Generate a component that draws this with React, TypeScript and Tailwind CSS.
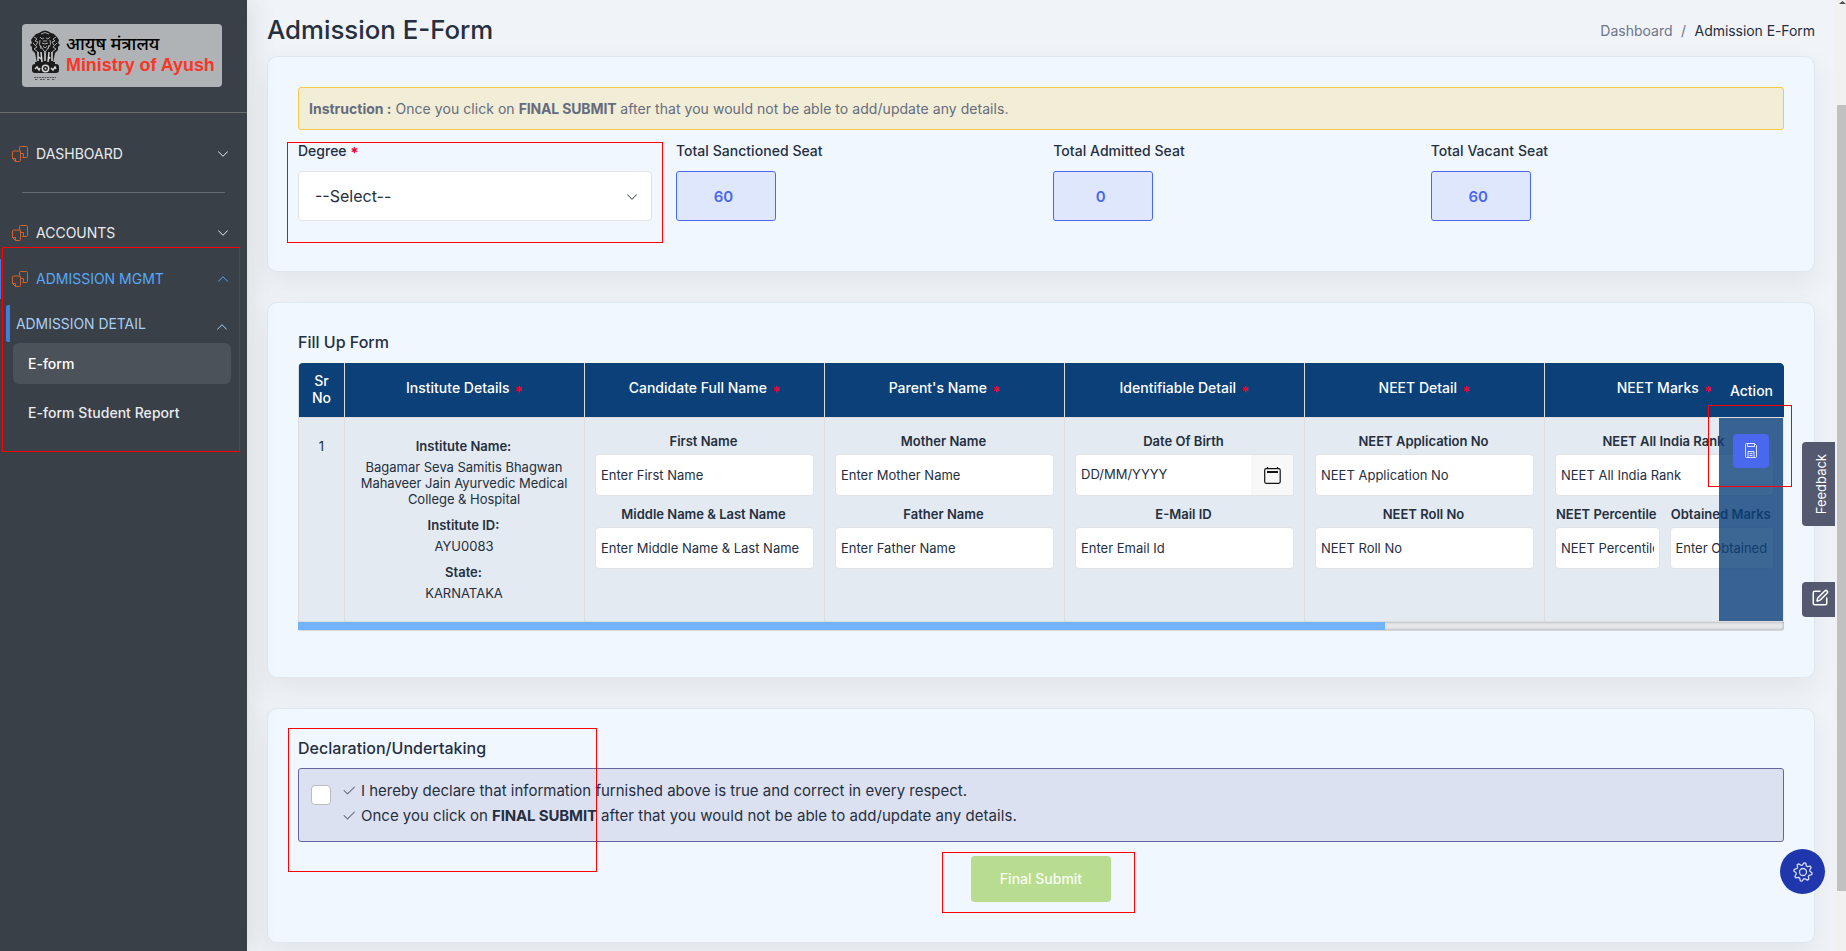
import React from "react";
import { BsChevronDown, BsChevronUp, BsCheck2 } from "react-icons/bs";
import { SquarePen } from "lucide-react";

function NavIcon() {
  return (
    <svg className="size-4 shrink-0" viewBox="0 0 16 16" fill="none" stroke="#d0622f" strokeWidth="1">
      <path d="M7.500 4.500v-3a1 1 0 0 1 1-1h6a1 1 0 0 1 1 1v9a1 1 0 0 1-1 1h-4" />
      <path d="M8.500 5H1.500a1 1 0 0 0-1 1v6.500l3 3h4a1 1 0 0 0 1-1z" />
      <path d="M.5 12.500h3v3" />
      <path d="M8.500 7.500h3v3l-1 1" />
    </svg>
  );
}

function Emblem() {
  return (
    <svg className="h-[51px] w-8 shrink-0" viewBox="0 0 32 51">
      <g fill="#1c1c1c">
        <path d="M10 3q6-5 12 0l3 1 3 3 2 3-1 3 2 2-2 2v3l-3 3-2 10 1 3H7l1-3-2-10-3-3v-3l-2-2 2-2-1-3 2-3 3-3z" />
        <rect x="3" y="34" width="27" height="9" rx="3" />
        <path d="M6 32h20v3H6z" />
      </g>
      <g fill="none" stroke="#b4b6b8" strokeWidth=".9">
        <path d="M12 4q4-3 8 0M11 7l2 2 2-1M21 7l-2 2-2-1M14 11h4M13 13q3 2 6 0M11 10q-2 5 2 8l2 3M21 10q2 5-2 8l-2 3M5 7l3 2-2 2 3 1-2 3M27 7l-3 2 2 2-3 1 2 3M4 13l4 4-3 2 4 3M28 13l-4 4 3 2-4 3M11 15l1 4M20 15l-1 4M14 16l2 2 2-2" />
      </g>
      <g fill="none" stroke="#d5d6d7" strokeWidth="1.5">
        <path d="M9 22v9M12 22l1 10M16 21v10M20 22l-1 10M23 22v9M10 27l2 2M21 27l-1 2" />
        <circle cx="16.500" cy="38.500" r="3.200" />
        <path d="M6 39l2-2 2 3 1-2M22 38l2 2 2-3 1 2" />
      </g>
      <circle cx="16.500" cy="38.500" r="1" fill="#ddd" />
      <path d="M5 47.500h22M6 49.500h3M11 49.500h5M18 49.500h3M23 49.500h3" stroke="#555" strokeWidth="1" strokeDasharray="2 .6" />
    </svg>
  );
}

function SaveIcon() {
  return (
    <svg className="h-[15px] w-3" viewBox="0 0 12 15" fill="none" stroke="#dfe6ff" strokeWidth="1">
      <path d="M1.500.5h8l2 2v11a1 1 0 0 1-1 1h-9a1 1 0 0 1-1-1v-12a1 1 0 0 1 1-1z" />
      <path d="M2.500.5v3h7v-3M3 14.500v-6h6v6M4.500 10.500h3M4.500 12.500h3" />
    </svg>
  );
}

function CalendarIcon() {
  return (
    <svg className="h-[17px] w-[17px]" viewBox="0 0 17 17" fill="none" stroke="#111" strokeWidth="1.200">
      <rect x=".7" y="1.700" width="15.500" height="14.600" rx="1.500" />
      <path d="M3.500 0v2M13.500 0v2" />
      <path d="M3 5h11" strokeWidth="2" />
    </svg>
  );
}

function GearIcon() {
  const n = 8;
  const pts: string[] = [];
  for (let i = 0; i < n * 4; i++) {
    const a = ((i - 0.5) / (n * 4)) * Math.PI * 2 + 0.2;
    const r = i % 4 < 2 ? 9.2 : 7;
    pts.push(`${(10 + r * Math.cos(a)).toFixed(2)},${(10 + r * Math.sin(a)).toFixed(2)}`);
  }
  return (
    <svg className="size-5" viewBox="0 0 20 20" fill="none" stroke="#d5dcf8" strokeWidth="1.300" strokeLinejoin="round">
      <polygon points={pts.join(" ")} />
      <circle cx="10" cy="10" r="3.500" />
    </svg>
  );
}

function NavItem({ label, open }: { label: string; open?: boolean }) {
  return (
    <div className={`flex h-10 items-center pr-[18px] pl-3 text-[14px] ${open ? "text-[#55a9f8]" : "text-[#e9ecef]"}`}>
      <NavIcon />
      <span className="ml-2 flex-1 pb-0.5">{label}</span>
      {open ? <BsChevronUp size={12} /> : <BsChevronDown size={12} />}
    </div>
  );
}

function Field({ label, placeholder, className = "" }: { label: string; placeholder: string; className?: string }) {
  return (
    <div className={`flex min-w-0 flex-col text-[13px] ${className}`}>
      <div className="flex h-[26px] items-center justify-center pt-0.5 pr-0.5 font-semibold whitespace-nowrap">{label}</div>
      <div className="flex h-[42px] items-center rounded-[4px] border border-[#e2e3e6] bg-white px-[5px] pt-0.5">
        <span className="overflow-hidden whitespace-nowrap">{placeholder}</span>
      </div>
    </div>
  );
}

function DateField() {
  return (
    <div className="flex flex-col text-[13px]">
      <div className="flex h-[26px] items-center justify-center pt-0.5 pr-0.5 font-semibold">Date Of Birth</div>
      <div className="flex h-[42px] items-stretch overflow-hidden rounded-l-[4px] border border-[#e2e3e6] bg-white">
        <span className="flex flex-1 items-center pl-[5px]">DD/MM/YYYY</span>
        <span className="flex w-[42px] items-center justify-center bg-[#f8f8f8]">
          <CalendarIcon />
        </span>
      </div>
    </div>
  );
}

function Column({ title, children }: { title: string; children: React.ReactNode }) {
  return (
    <div className="flex w-60 shrink-0 flex-col border-l border-[#dddddf]">
      <div className="flex h-[54px] items-center justify-center gap-[5px] bg-[#0b4079] pb-1 text-sm font-medium text-white">
        <span>{title}</span>
        <span className="relative top-[3px] text-[15px] leading-none font-bold text-[#f0022c]">*</span>
      </div>
      <div className="flex flex-1 flex-col gap-[5px] border-t border-b border-[#dddddf] pt-[10px] pr-[10px] pl-[10px]">{children}</div>
    </div>
  );
}

function Seat({ label, value }: { label: string; value: string }) {
  return (
    <div className="flex w-[353.5px] flex-col">
      <span className="h-5 text-sm leading-5 font-medium tracking-[0.04px]">{label}</span>
      <div className="mt-[10px] flex h-[50px] w-[100px] items-center justify-center rounded-[3px] border border-[#4a68ee] bg-[#dfe7fd] pt-0.5 pr-[5px] text-[15px] font-semibold text-[#4a68ee]">
        {value}
      </div>
    </div>
  );
}

const card = "rounded-[10px] border border-[#dfe8f1] bg-[#f0f7ff] shadow-[0_12px_28px_rgba(60,80,80,0.08)]";

export default function App() {
  return (
    <div className="relative flex h-[951px] w-[1846px] overflow-hidden bg-[#f0f3f8] font-['Inter',sans-serif] text-[#252f40]">
      <aside className="z-10 w-[247px] shrink-0 bg-[#3a4047] shadow-[0_0_28px_rgba(60,80,80,0.16)]">
        <div className="flex h-[113px] items-start border-b border-[#6a6c6c] px-[22px] pt-6">
          <div className="flex h-[63px] w-[200px] items-center rounded-[4px] bg-[#b0b3b6] pl-[7px]">
            <Emblem />
            <div className="ml-[5px] flex flex-col pb-0.5 whitespace-nowrap">
              <span className="h-5 pt-px font-['Noto_Sans_Devanagari','Noto_Sans',sans-serif] text-[17.800px] leading-5 font-medium text-black">आयुष मंत्रालय</span>
              <span className="h-5 font-['Liberation_Sans',sans-serif] text-[17.900px] leading-5 font-bold text-[#f93528]">Ministry of Ayush</span>
            </div>
          </div>
        </div>
        <div className="pt-[21px]">
          <NavItem label="DASHBOARD" />
        </div>
        <div className="mx-[22px] mt-[18px] h-px bg-[#65696f]" />
        <div className="pt-5">
          <NavItem label="ACCOUNTS" />
        </div>
        <div className="mt-[6px] flex h-10 items-stretch">
          <div className="w-px bg-[#4080dd]" />
          <div className="-ml-px flex-1">
            <NavItem label="ADMISSION MGMT" open />
          </div>
        </div>
        <div className="mt-[6px] ml-[6px] flex h-[37px] items-center text-[#a8cff5]">
          <div className="h-full w-1 rounded-l-[2px] bg-[#3f7fdc]" />
          <span className="ml-[6px] flex-1 pt-px text-[13.900px]">ADMISSION DETAIL</span>
          <BsChevronUp size={12} className="mt-[6px] mr-[19px]" />
        </div>
        <div className="mt-px mr-4 ml-[13px] flex h-[41px] items-center rounded-md bg-[#4c5259] pl-[15px] text-[14px] font-medium text-white">E-form</div>
        <div className="mt-2 mr-4 ml-[13px] flex h-[41px] items-center pl-[15px] text-[14px] font-medium tracking-[0.04px] text-[#e9ecef]">E-form Student Report</div>
      </aside>

      <main className="flex w-[1588px] shrink-0 flex-col pr-5 pl-5">
        <div className="flex h-14 shrink-0 items-center justify-between pt-[4px]">
          <h1 className="text-[25.800px] font-medium">Admission E-Form</h1>
          <div className="flex gap-[8.5px] text-[14px]">
            <span className="text-[#6e7589]">Dashboard</span>
            <span className="text-[#6e7589]">/</span>
            <span className="tracking-[-0.06px]">Admission E-Form</span>
          </div>
        </div>

        <section className={`${card} h-[216px] shrink-0 px-[30px] pt-[30px]`}>
          <div className="flex h-[43px] items-center rounded-[3px] border border-[#f5cb45] bg-[#f2edd6] px-[10px] text-[14px] tracking-[0.05px] text-[#656c7e]">
            <span>
              <b className="tracking-normal">Instruction :</b> Once you click on <b className="tracking-[-0.15px]">FINAL SUBMIT</b> after that you would not be able to add/update any
              details.
            </span>
          </div>
          <div className="mt-[11px] flex gap-6">
            <div className="flex w-[354px] flex-col">
              <span className="h-5 text-sm leading-5 font-medium">
                Degree <span className="relative top-0.5 text-[15px] leading-none font-bold text-[#f0022c]">*</span>
              </span>
              <div className="mt-[10px] flex h-[50px] items-center justify-between rounded-[4px] border border-[#dfe3e8] bg-white pr-[13px] pl-4 text-base">
                <span>--Select--</span>
                <BsChevronDown size={12} className="mt-[2px]" />
              </div>
            </div>
            <Seat label="Total Sanctioned Seat" value="60" />
            <Seat label="Total Admitted Seat" value="0" />
            <Seat label="Total Vacant Seat" value="60" />
          </div>
        </section>

        <section className={`${card} mt-[30px] h-[376px] shrink-0 px-[30px] pt-[29px]`}>
          <h2 className="h-[31px] text-[16px] leading-5 font-medium">Fill Up Form</h2>
          <div className="relative flex h-[259px] overflow-hidden rounded-t-[5px] bg-[#e3eaf1]">
            <div className="flex w-[46px] shrink-0 flex-col border-l border-[#dddddf] text-center">
              <div className="h-[54px] bg-[#0b4079] pt-[9px] text-sm leading-[17px] font-medium text-white">
                Sr
                <br />
                No
              </div>
              <div className="flex-1 border-t border-b border-[#dddddf] pt-[19px] text-[13px]">1</div>
            </div>
            <Column title="Institute Details">
              <div className="pt-[10px] pr-[5px] pl-[4px] text-center text-[13px] leading-4">
                <div className="pr-px font-semibold">Institute Name:</div>
                <div className="mt-[5px] tracking-[-0.02px]">Bagamar Seva Samitis Bhagwan Mahaveer Jain Ayurvedic Medical College &amp; Hospital</div>
                <div className="mt-[10px] pr-px font-semibold">Institute ID:</div>
                <div className="mt-[5px]">AYU0083</div>
                <div className="mt-[10px] pr-px font-semibold">State:</div>
                <div className="mt-[5px]">KARNATAKA</div>
              </div>
            </Column>
            <Column title="Candidate Full Name">
              <Field label="First Name" placeholder="Enter First Name" />
              <Field label="Middle Name & Last Name" placeholder="Enter Middle Name & Last Name" />
            </Column>
            <Column title="Parent's Name">
              <Field label="Mother Name" placeholder="Enter Mother Name" />
              <Field label="Father Name" placeholder="Enter Father Name" />
            </Column>
            <Column title="Identifiable Detail">
              <DateField />
              <Field label="E-Mail ID" placeholder="Enter Email Id" />
            </Column>
            <Column title="NEET Detail">
              <Field label="NEET Application No" placeholder="NEET Application No" />
              <Field label="NEET Roll No" placeholder="NEET Roll No" />
            </Column>
            <Column title="NEET Marks">
              <Field label="NEET All India Rank" placeholder="NEET All India Rank" />
              <div className="flex gap-[10px]">
                <Field className="flex-1" label="NEET Percentile" placeholder="NEET Percentile" />
                <Field className="flex-1" label="Obtained Marks" placeholder="Enter Obtained" />
              </div>
            </Column>
            <div className="absolute top-0 right-0 flex h-full w-[65px] flex-col">
              <div className="flex h-[54px] items-center justify-center bg-[#0b4079] text-[14px] font-medium text-white">Action</div>
              <div className="mt-px mr-px mb-px flex flex-1 items-start justify-center bg-[#0b4079]/80 pt-4">
                <div className="flex h-[34px] w-9 items-center justify-center rounded-[4px] bg-[#4a68ee] pb-0.5">
                  <SaveIcon />
                </div>
              </div>
            </div>
          </div>
          <div className="h-[9px] rounded-b-[3px] border-b border-[#d4d6d9] bg-[#e6e8ec] shadow-[inset_0_0_3px_#999]">
            <div className="h-2 w-[1087px] bg-[#72b3fb]" />
          </div>
        </section>

        <section className={`${card} mt-[30px] flex h-[235px] shrink-0 flex-col px-[30px] pt-[29px]`}>
          <h2 className="h-[30px] text-[16px] leading-5 font-medium tracking-[0.03px]">Declaration/Undertaking</h2>
          <div className="flex h-[74px] rounded-[3px] border border-[#66659f] bg-[#dce1f1] pt-[9px] pl-3 text-[15px]">
            <div className="mt-[7px] size-5 rounded-[4px] border border-[#bcbcbc] bg-white" />
            <div className="ml-[10px] leading-[25px]">
              <div className="flex items-center gap-[4px]">
                <BsCheck2 size={16} className="text-[#59617a]" />
                <span>I hereby declare that information furnished above is true and correct in every respect.</span>
              </div>
              <div className="flex items-center gap-[4px]">
                <BsCheck2 size={16} className="text-[#59617a]" />
                <span>
                  Once you click on <b className="tracking-[-0.15px]">FINAL SUBMIT</b>
                  <span className="tracking-[0.05px]"> after that you would not be able to add/update any details.</span>
                </span>
              </div>
            </div>
          </div>
          <div className="mt-[14px] flex h-[46px] w-[140px] items-center justify-center self-center rounded-[4px] bg-[#b8dd90] pb-px text-[14px] font-medium text-[#fafdf5]">
            Final Submit
          </div>
        </section>
      </main>

      <div className="z-10 flex w-[11px] shrink-0 flex-col bg-[#f1f1f1] pl-0.5">
        <div className="mt-px ml-0.5 h-[3px] w-[7px] bg-[#505050] [clip-path:polygon(50%_0,100%_100%,0_100%)]" />
        <div className="mt-[101px] h-[786px] bg-[#c1c1c1]" />
      </div>

      <div className="absolute top-[442px] left-[1802px] z-20 flex h-[84px] w-[33px] items-center justify-center rounded-l-[4px] bg-[#555970] pl-[6px]">
        <span className="rotate-180 text-[13px] whitespace-nowrap text-white [writing-mode:vertical-rl]">Feedback</span>
      </div>
      <div className="absolute top-[582px] left-[1802px] z-20 flex h-[35px] w-[33px] items-center justify-center rounded-l-[4px] bg-[#555970] pb-[3px] pl-[3px] text-white">
        <SquarePen size={18} />
      </div>
      <div className="absolute top-[849px] left-[1780px] z-20 flex size-[45px] items-center justify-center rounded-full bg-[#2036ad]">
        <GearIcon />
      </div>

      <div className="absolute top-[247px] left-[2px] z-30 h-[205px] w-[238px] border border-[#f00]" />
      <div className="absolute top-[142px] left-[287px] z-30 h-[101px] w-[376px] border border-[#f00]" />
      <div className="absolute top-[405px] left-[1708px] z-30 h-[82px] w-[84px] border border-[#f00]" />
      <div className="absolute top-[728px] left-[288px] z-30 h-[144px] w-[309px] border border-[#f00]" />
      <div className="absolute top-[852px] left-[942px] z-30 h-[61px] w-[193px] border border-[#f00]" />
    </div>
  );
}
